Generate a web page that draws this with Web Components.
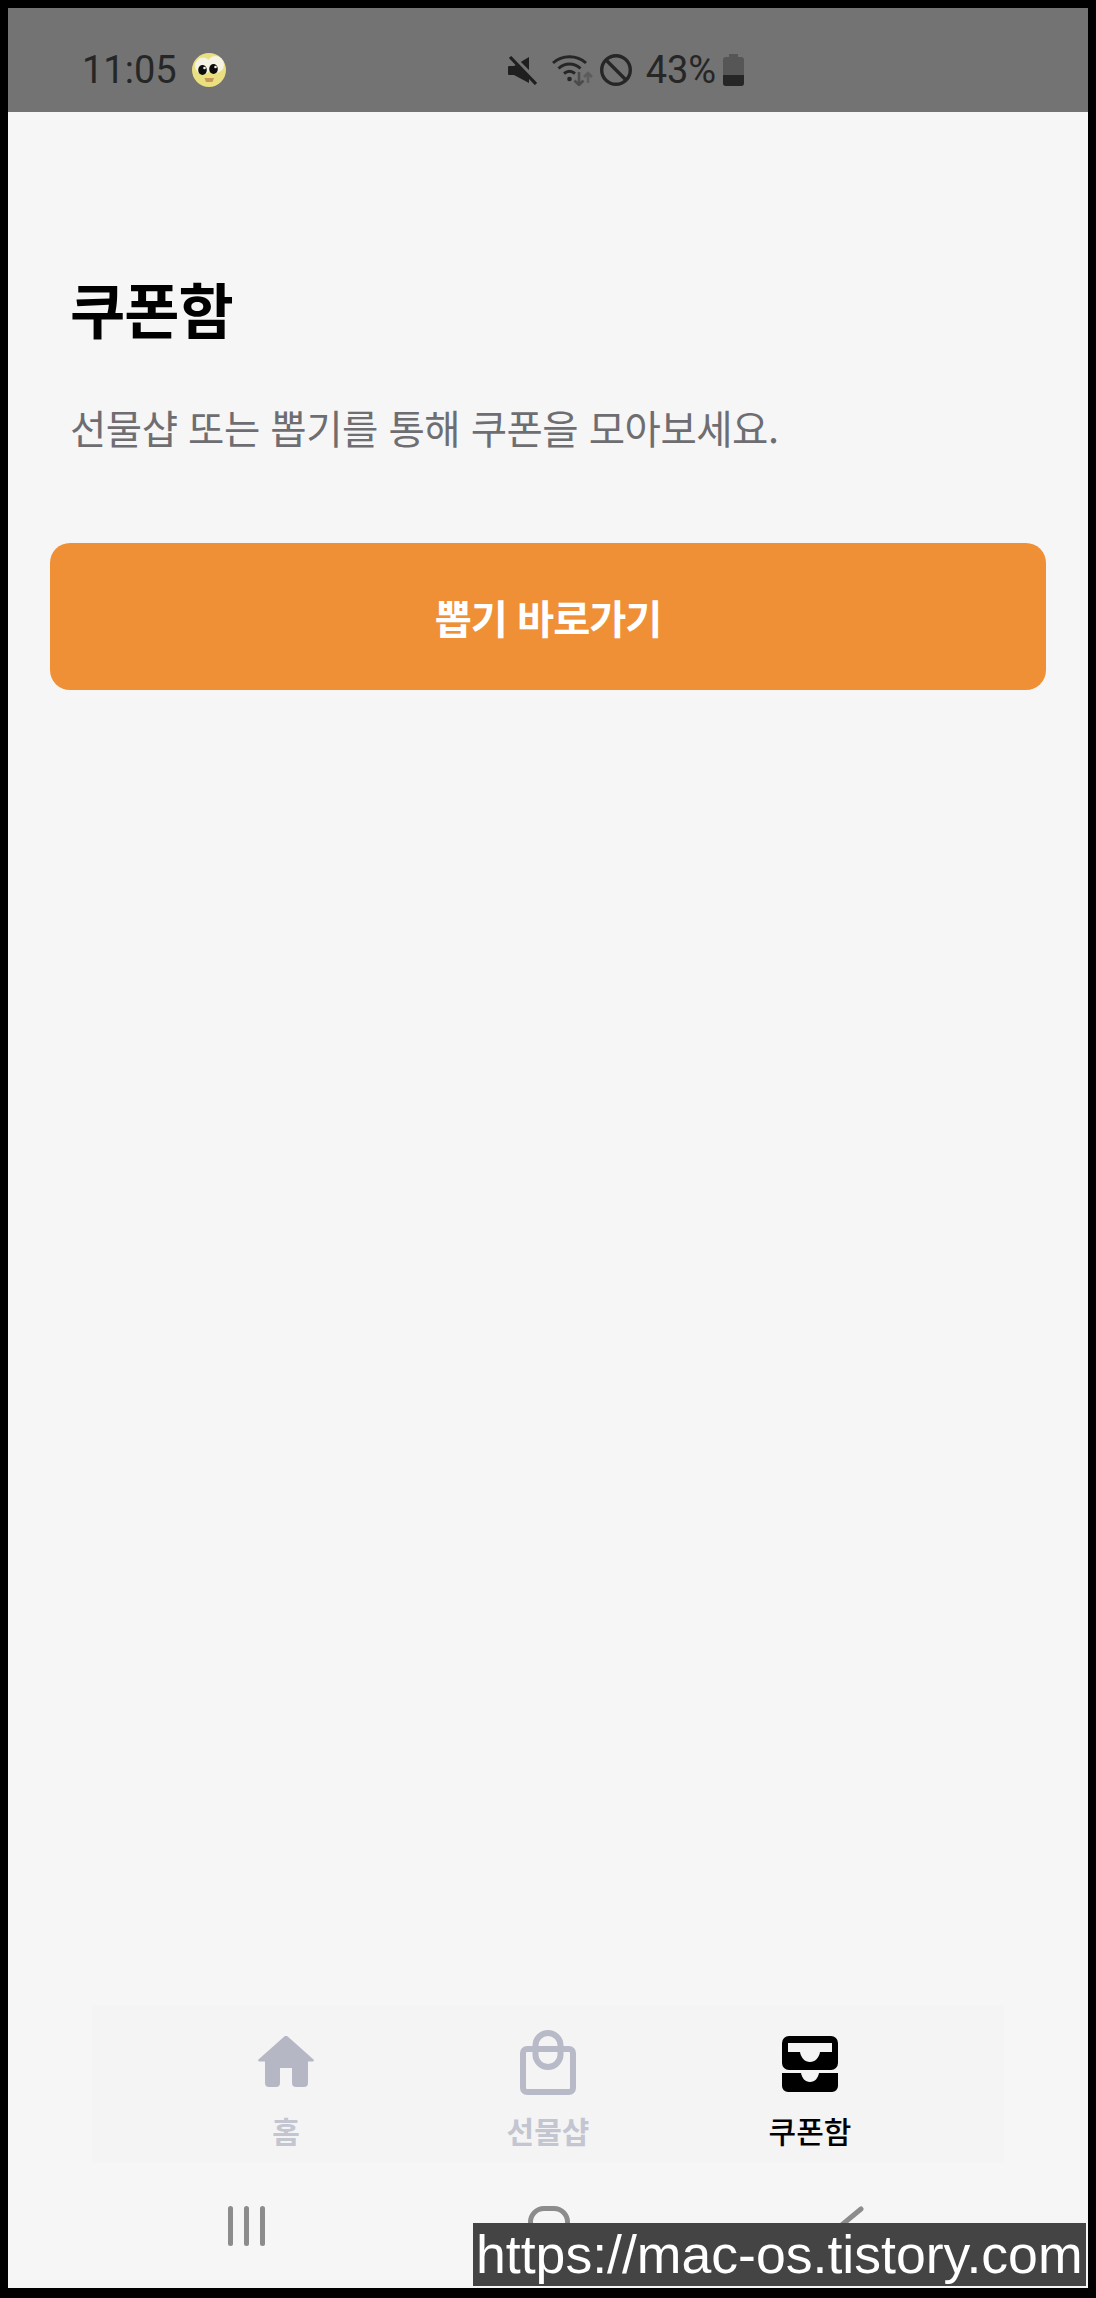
<!DOCTYPE html>
<html lang="ko"><head><meta charset="utf-8"><title>쿠폰함</title>
<style>
html,body{margin:0;padding:0;background:#000}
body{font-family:"Noto Sans CJK KR","Noto Sans",sans-serif}
</style></head><body>
<phone-frame>
  <status-bar slot="status"></status-bar>
  <coupon-page></coupon-page>
  <tab-nav slot="nav"></tab-nav>
  <system-nav slot="sys"></system-nav>
  <water-mark slot="mark">https://mac-os.tistory.com</water-mark>
</phone-frame>
<script>
function def(name,html){customElements.define(name,class extends HTMLElement{constructor(){super();this.attachShadow({mode:'open'}).innerHTML=html;}});}
def('phone-frame',`<style>
:host{display:block;width:1096px;height:2298px;box-sizing:border-box;padding:8px 8px 10px;background:#000}
.screen{position:relative;height:100%;background:#f6f6f6;display:flex;flex-direction:column;overflow:hidden}
.main{flex:1}
</style><div class="screen"><slot name="status"></slot><div class="main"><slot></slot></div><slot name="nav"></slot><slot name="sys"></slot><slot name="mark"></slot></div>`);
def('status-bar',`<style>
:host{display:flex;align-items:center;height:104px;box-sizing:border-box;background:#737373;color:#262626;font-family:Roboto,sans-serif;font-size:38px;padding:20px 0 0 74px}
.t{line-height:1}
.e{margin-left:15px;display:block}
.r{display:flex;align-items:center;margin-left:282px}
.p{margin:0 7px 0 14px;line-height:1}
svg{display:block}
</style>
<span class="t">11:05</span>
<svg class="e" width="34" height="34" viewBox="0 0 34 34"><circle cx="17" cy="17" r="17" fill="#ebe07f"/><ellipse cx="11" cy="13" rx="8" ry="8.500" fill="#f4f3e4"/><ellipse cx="23.500" cy="11.500" rx="8.500" ry="8.500" fill="#f4f3e4"/><ellipse cx="10.500" cy="17" rx="4.300" ry="5" fill="#0c0c0c"/><ellipse cx="21.500" cy="16" rx="4.300" ry="5" fill="#0c0c0c"/><circle cx="12.500" cy="15" r="1.300" fill="#f4f3e4"/><circle cx="23.500" cy="14" r="1.300" fill="#f4f3e4"/><path d="M12.500 25h9.500l-1.500 4h-6.500z" fill="#c9975a"/></svg>
<div class="r">
<svg width="29" height="29" viewBox="0 0 29 29"><path d="M0 11a1 1 0 0 1 1-1h5L21 1v26L6 19H1a1 1 0 0 1-1-1z" fill="#1f1f1f"/><path d="M2 -1l28 28" stroke="#737373" stroke-width="5.500"/><path d="M2 1l26 27" stroke="#1f1f1f" stroke-width="3.200"/></svg>
<svg style="margin-left:15px" width="41" height="31" viewBox="0 0 41 31"><g fill="none" stroke="#262626" stroke-width="3"><path d="M1 8C10 -.5 25 -.5 34 8"/><path d="M6.500 13.500C13 7.500 22 7.500 28.500 13.500"/><path d="M12 18.500c3.500-2.800 7.500-2.800 11 0"/></g><circle cx="17.500" cy="24" r="2.300" fill="#262626"/><g fill="none" stroke-width="2.600"><path d="M27 17v13M22.500 25.500l4.500 4.500 4.500-4.500" stroke="#4c4c4c"/><path d="M36 28V18M32 22l4-4 4 4" stroke="#5c5c5c"/></g></svg>
<svg style="margin-left:7px" width="32" height="32" viewBox="0 0 32 32"><circle cx="16" cy="16" r="14.300" fill="none" stroke="#262626" stroke-width="3.400"/><path d="M6 6l20 20" stroke="#262626" stroke-width="3.400"/></svg>
<span class="p">43%</span>
<svg width="21" height="32" viewBox="0 0 21 32"><path d="M6 0h9v3h3a3 3 0 0 1 3 3v23a3 3 0 0 1-3 3H3a3 3 0 0 1-3-3V6a3 3 0 0 1 3-3h3z" fill="#565656"/><path d="M0 21h21v8a3 3 0 0 1-3 3H3a3 3 0 0 1-3-3z" fill="#262626"/></svg>
</div>`);
def('coupon-page',`<style>
:host{display:block;font-family:"Noto Sans CJK KR",sans-serif;padding:0 42px}
h1{margin:0;padding-top:160px;font-size:60px;line-height:72px;font-weight:700;color:#000;letter-spacing:-1px;padding-left:20px}
p{margin:0;padding-top:55px;padding-left:20px;font-size:39.500px;line-height:56px;font-weight:400;color:#6e6e72;letter-spacing:-.5px}
.cta{display:flex;align-items:center;justify-content:center;height:147px;margin-top:88px;border-radius:20px;background:#ef9036;color:#fff;font-size:40.300px;font-weight:700;letter-spacing:-1px}
</style><h1>쿠폰함</h1><p>선물샵 또는 뽑기를 통해 쿠폰을 모아보세요.</p><div class="cta">뽑기 바로가기</div>`);
def('tab-item',`<style>
:host{display:flex;flex-direction:column;align-items:center;width:262px;color:#c3c5d1;font-size:30px;font-weight:700}
:host([active]){color:#000;font-weight:500}
.i{height:65px;display:flex;align-items:flex-start;justify-content:center}
.l{line-height:34px;margin-top:18px}
</style><div class="i"><slot name="icon"></slot></div><div class="l"><slot></slot></div>`);
def('tab-nav',`<style>
:host{display:flex;justify-content:center;height:158px;margin:0 84px;box-sizing:border-box;padding-top:25px;background:#f4f4f4}
</style>
<tab-item><svg slot="icon" style="margin-top:6px" width="56" height="51" viewBox="0 0 56 51"><path d="M26 .8a3 3 0 0 1 4 0L55.500 23.500Q56.800 25.500 54 25.500H50V47a4 4 0 0 1-4 4H38a4 4 0 0 1-4-4V32H22V47a4 4 0 0 1-4 4H11a4 4 0 0 1-4-4V25.500H2Q-.8 25.500 .5 23.500Z" fill="#b5b7c5"/></svg>홈</tab-item>
<tab-item><svg slot="icon" width="56" height="65" viewBox="0 0 56 65"><g fill="none" stroke="#b8bac8" stroke-width="6"><rect x="3" y="19" width="50" height="43" rx="4"/><path d="M15.500 19V15.500a12.500 12.500 0 0 1 25 0V19"/><path d="M15.500 19V24.500a12.500 12.500 0 0 0 25 0V19"/></g></svg>선물샵</tab-item>
<tab-item active><svg slot="icon" style="margin-top:6px" width="56" height="56" viewBox="0 0 56 56"><path fill-rule="evenodd" d="M7 0h42a7 7 0 0 1 7 7v20a7 7 0 0 1-7 7H7a7 7 0 0 1-7-7V7a7 7 0 0 1 7-7zM6 7v9h12c1 6 5 10 10 10s9-4 10-10h12V7z"/><path d="M0 37h19c1 5 4 9 9 9s8-4 9-9h19v13a6 6 0 0 1-6 6H6a6 6 0 0 1-6-6z"/></svg>쿠폰함</tab-item>`);
def('system-nav',`<style>
:host{display:flex;height:125px;box-sizing:border-box;padding-top:43px;margin-left:220px}
i{display:block;width:5px;height:40px;border-radius:3px;background:#8c8c8c;margin-right:11px}
.h{width:42px;height:40px;border:5px solid #8c8c8c;border-radius:16px;box-sizing:border-box;margin-left:252px}
svg{margin-left:265px;display:block}
</style><i></i><i></i><i></i><div class="h"></div><svg width="30" height="44" viewBox="0 0 30 44"><path d="M26 3L3 22L26 41" fill="none" stroke="#8c8c8c" stroke-width="5" stroke-linecap="round"/></svg>`);
def('water-mark',`<style>
:host{position:absolute;right:2px;bottom:2px;width:613px;height:63px;background:#444;color:#fff;font-family:"Liberation Sans",sans-serif;font-size:53.600px;line-height:63px;white-space:nowrap;overflow:hidden;padding-left:3px;box-sizing:border-box}
</style><slot></slot>`);
</script>
</body></html>
